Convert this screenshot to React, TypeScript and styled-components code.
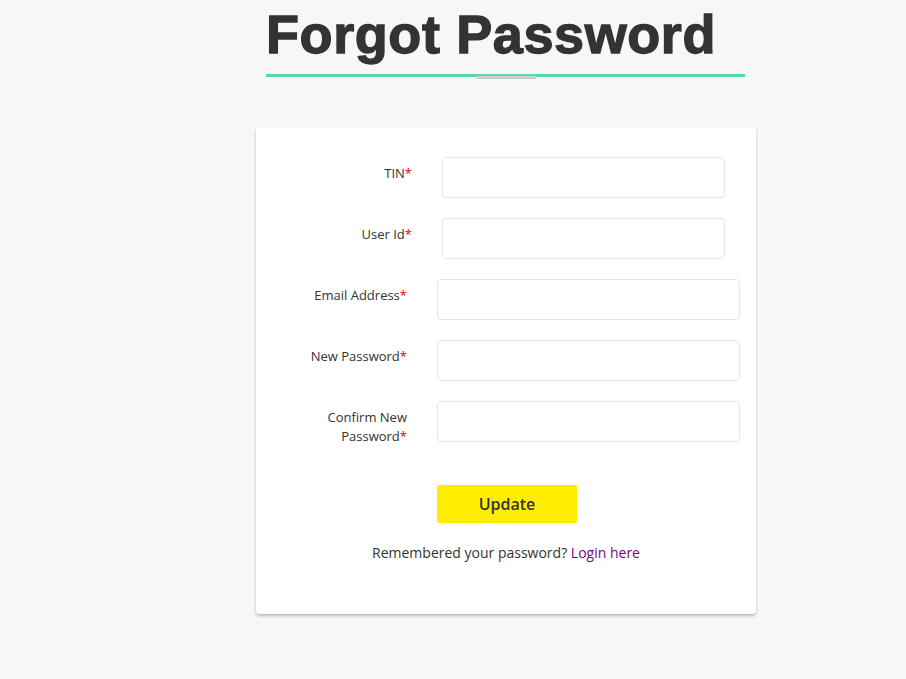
import React from "react";
import styled, { createGlobalStyle } from "styled-components";

const GlobalStyle = createGlobalStyle`
  html, body {
    margin: 0;
    padding: 0;
    background: #f7f7f7;
    font-family: "Open Sans", "Liberation Sans", sans-serif;
    color: #333;
  }
`;

type Field = { label: string; type: string; narrow?: boolean };

const fields: Field[] = [
  { label: "TIN", type: "text", narrow: true },
  { label: "User Id", type: "text", narrow: true },
  { label: "Email Address", type: "email" },
  { label: "New Password", type: "password" },
  { label: "Confirm New Password", type: "password" },
];

export default function App() {
  return (
    <Page>
      <GlobalStyle />
      <Header>
        <Title>Forgot Password</Title>
        <Underline />
        <Accent />
      </Header>
      <Card>
        <Form>
          {fields.map((f) => (
            <Row key={f.label} narrow={f.narrow}>
              <Label>
                {f.label}
                <Required>*</Required>
              </Label>
              <Input type={f.type} />
            </Row>
          ))}
          <ButtonRow>
            <UpdateButton type="button">Update</UpdateButton>
          </ButtonRow>
        </Form>
        <Footer>
          Remembered your password? <LoginLink href="#">Login here</LoginLink>
        </Footer>
      </Card>
    </Page>
  );
}

const Page = styled.div`
  min-height: 679px;
  padding: 0 0 60px 256px;
  box-sizing: border-box;
`;

const Header = styled.div`
  width: 479px;
  margin-left: 10px;
  display: flex;
  flex-direction: column;
  align-items: center;
`;

const Title = styled.h1`
  align-self: flex-start;
  margin: 0;
  padding-top: 3px;
  font-family: "Liberation Sans", Arial, sans-serif;
  font-weight: 700;
  font-size: 54px;
  line-height: 62px;
  letter-spacing: 0.6px;
  color: #333;
  -webkit-text-stroke: 1.3px #333;
`;

const Underline = styled.div`
  align-self: stretch;
  height: 3px;
  margin-top: 9px;
  background: #56d6b5;
`;

const Accent = styled.div`
  width: 60px;
  height: 3px;
  margin-top: -1px;
  margin-left: 1px;
  background: #cfcfcf;
`;

const Card = styled.div`
  width: 500px;
  margin-top: 48px;
  padding: 30px 0 51px;
  box-sizing: border-box;
  background: #fff;
  border-radius: 4px;
  box-shadow: 0 2px 3px rgba(0, 0, 0, 0.25);
`;

const Form = styled.div`
  display: flex;
  flex-direction: column;
  gap: 20px;
`;

const Row = styled.div<{ narrow?: boolean }>`
  display: grid;
  grid-template-columns: ${(p) => (p.narrow ? "126px 283px" : "121px 303px")};
  column-gap: 30px;
  padding-left: 30px;
  align-items: start;
`;

const Label = styled.label`
  display: block;
  padding-top: 7px;
  text-align: right;
  font-size: 13px;
  line-height: 19px;
  color: #333;
`;

const Required = styled.span`
  color: #e00000;
`;

const Input = styled.input`
  height: 41px;
  box-sizing: border-box;
  border: 1px solid #e6e6e6;
  border-radius: 4px;
  background: #fff;
  padding: 0 10px;
  font-family: inherit;
  font-size: 13px;
  outline: none;
`;

const ButtonRow = styled.div`
  padding-left: 181px;
  margin-top: 19px;
`;

const UpdateButton = styled.button`
  width: 140px;
  height: 38px;
  border: none;
  background: #ffed00;
  color: #333;
  font-family: "Open Sans", sans-serif;
  font-weight: 600;
  font-size: 16px;
  cursor: pointer;
`;

const Footer = styled.p`
  margin: 20px 0 0;
  text-align: center;
  font-size: 14px;
  line-height: 20px;
  color: #333;
`;

const LoginLink = styled.a`
  color: #800080;
  text-decoration: none;
`;
